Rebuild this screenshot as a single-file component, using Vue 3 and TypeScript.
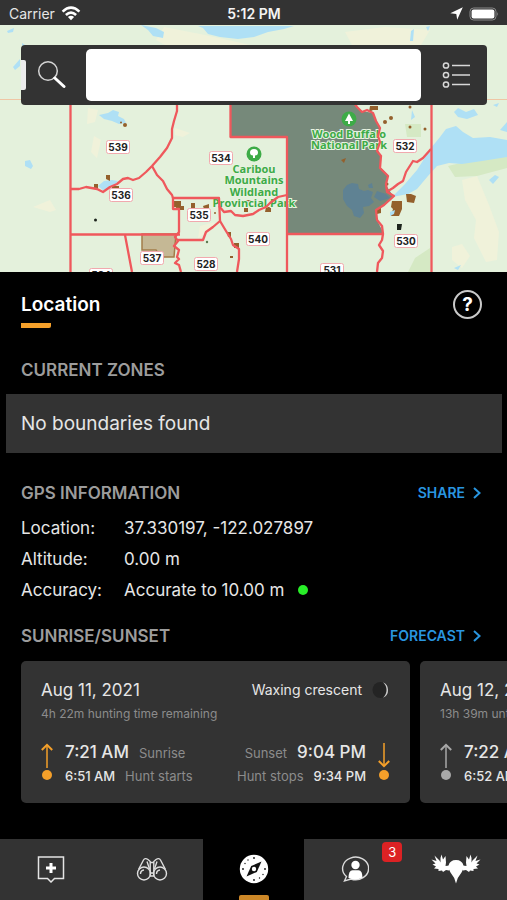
<script setup lang="ts">
import { ref } from 'vue'

interface ZoneLabel {
  id: string
  x: number
  y: number
}

interface SunEvent {
  time: string
  label: string
  huntTime: string
  huntLabel: string
}

interface DayCard {
  date: string
  remaining: string
  moon: string
  active: boolean
  rise: SunEvent
  set: SunEvent
}

const query = ref('')

const zones: ZoneLabel[] = [
  { id: '539', x: 118, y: 147 },
  { id: '536', x: 121, y: 195 },
  { id: '534', x: 221, y: 158 },
  { id: '535', x: 199, y: 215 },
  { id: '537', x: 152, y: 258 },
  { id: '528', x: 206, y: 264 },
  { id: '540', x: 258, y: 239 },
  { id: '532', x: 405, y: 146 },
  { id: '530', x: 406, y: 241 },
  { id: '531', x: 332, y: 270 },
  { id: '524', x: 101, y: 275 },
]

const gps = [
  { term: 'Location:', value: '37.330197, -122.027897', ok: false },
  { term: 'Altitude:', value: '0.00 m', ok: false },
  { term: 'Accuracy:', value: 'Accurate to 10.00 m', ok: true },
]

const days: DayCard[] = [
  {
    date: 'Aug 11, 2021',
    remaining: '4h 22m hunting time remaining',
    moon: 'Waxing crescent',
    active: true,
    rise: { time: '7:21 AM', label: 'Sunrise', huntTime: '6:51 AM', huntLabel: 'Hunt starts' },
    set: { time: '9:04 PM', label: 'Sunset', huntTime: '9:34 PM', huntLabel: 'Hunt stops' },
  },
  {
    date: 'Aug 12, 2021',
    remaining: '13h 39m until hunting time',
    moon: 'Waxing crescent',
    active: false,
    rise: { time: '7:22 AM', label: 'Sunrise', huntTime: '6:52 AM', huntLabel: 'Hunt starts' },
    set: { time: '9:02 PM', label: 'Sunset', huntTime: '9:32 PM', huntLabel: 'Hunt stops' },
  },
]
</script>

<template>
  <div class="screen">
    <header class="status">
      <div class="status-side">
        <span>Carrier</span>
        <svg width="20" height="15" viewBox="0 0 20 15" fill="none" stroke="#fff" stroke-width="2.6">
          <path d="M1.6 5.6Q10-2.2 18.4 5.6" />
          <path d="M4.9 9Q10 4.2 15.1 9" />
          <path d="M10 14.2L6.9 11.1Q10 8.6 13.1 11.1Z" fill="#fff" stroke="none" />
        </svg>
      </div>
      <span class="clock">5:12 PM</span>
      <div class="status-side status-right">
        <svg width="13" height="13" viewBox="0 0 13 13"><path d="M12.8.3L.3 6.2L6.3 7L7.2 12.8Z" fill="#fff" /></svg>
        <svg width="30" height="14" viewBox="0 0 30 14">
          <rect x="1" y="1" width="26" height="12" rx="3.6" fill="none" stroke="#8a8a8a" />
          <rect x="2.6" y="2.6" width="22.8" height="8.8" rx="2" fill="#fff" />
          <path d="M28.2 5Q30 7 28.2 9Z" fill="#8a8a8a" />
        </svg>
      </div>
    </header>

    <section class="map" aria-label="Map">
      <svg class="map-art" viewBox="0 25 507 247" preserveAspectRatio="xMidYMid slice">
        <rect y="25" width="507" height="247" fill="#e4f1dc" />
        <g fill="#f0f2da">
          <path d="M164 27L200 34L228 40L250 45H165L156 40Z" />
          <path d="M345 32L385 27L430 30L421 45H352Z" />
          <path d="M88 108L98 110L95 122L87 124ZM94 136L101 140L97 158L91 152Z" />
          <path d="M33 207L50 200L56 210L50 212ZM175 128L190 133L183 137L175 135Z" />
          <path d="M462 180L477 176L489 205L499 232L497 260L486 262L474 238L476 220L465 200Z" />
          <path d="M452 247L462 244L470 256L462 268L452 260Z" />
          <path d="M200 226L215 222L208 232L198 238Z" />
        </g>
        <g fill="#d5e9c4">
          <path d="M448 166L507 152V168L477 176L455 177Z" />
          <path d="M405 124H421V137H407Z" />
          <path d="M415 258L430 248V272H408Z" />
        </g>
        <g fill="#afe0f5">
          <path d="M141 25L156 28L164 32L163 38L153 36L148 30Z" />
          <path d="M198 26H294L284 29L268 32L254 37L238 39L220 37L208 34L203 28Z" />
          <path d="M7 31L14 28L13 32L8 33ZM13 67L20 59V66L15 70ZM22 43L25 45L22 46Z" />
          <path d="M411 31L414 29L413 41L410 41ZM426 27L430 26L428 31Z" />
          <path d="M99 115L108 113L113 110L119 112L118 116L124 119L126 123L119 124L112 121L104 119Z" />
          <path d="M25 161L30 160L33 166L31 169L25 166Z" />
          <path d="M98 186L104 181L112 180L118 181L114 186L104 191Z" />
          <path d="M392 197L405 184L417 170L431 148L440 137L446 129L456 126L463 132L473 138L490 137L507 140V157L482 161L462 164L449 163L437 166L428 176L417 189L408 194Z" />
          <path d="M458 108L466 112L474 109L478 115L467 119L458 117L454 112ZM493 105L499 103L497 107ZM412 110L415 117L411 120Z" />
          <path d="M500 130L507 122V132ZM489 180L495 175L499 177L493 184ZM454 268L461 265L458 270Z" />
        </g>
        <path d="M0 99.500H21M487 99.500H507" stroke="#efc6a4" fill="none" />
        <path
          d="M230 100H352L357 107L362 111L373 113L376 121L380 128L378 140L378 150L381 158L381 168L388 175L386 185L393 196L385 205L376 210L377 220L382 230L383 234H287V137H230Z"
          fill="#76897a" />
        <g fill="#5f8293">
          <path d="M343 190L347 185L352 183L358 184L359 189L364 191L368 190L373 192L371 198L374 202L369 206L363 207L364 213L360 218L354 216L352 210L347 206L343 199Z" />
          <path d="M368 185L372 183L373 188L369 188ZM377 191L386 194L390 198L380 201L374 197Z" />
        </g>
        <path d="M142 234H176L174 257H161L156 250L142 250Z" fill="#c5b895" stroke="#a37c49" stroke-width="1.500" />
        <g fill="#94602c">
          <circle cx="121" cy="122.500" r="1" /><circle cx="125" cy="125" r="2" />
          <circle cx="385" cy="122" r="2" /><circle cx="391" cy="118" r="2" />
          <circle cx="410" cy="107" r="1.500" /><circle cx="410" cy="127" r="1.500" /><circle cx="425" cy="129" r="1.500" />
          <path d="M106 175H110V181L106 179ZM94 184H98V189H94ZM112 186H119V189H112ZM174 201H181V206H184V210H176V207H174ZM191 203H195V208H191ZM203 206L209 204V208L204 209Z" />
          <path d="M245 200H251V203H245ZM244 208H248V212H244ZM266 207H271V212H265ZM227 232H231V237H228ZM234 243H239V248H234ZM230 256H233V258H230Z" />
          <path d="M370 106H378V110H373L369 112ZM392 201H402V209L399 216H391L393 209L391 207ZM406 194H411L416 196L414 203L407 202ZM341 160L346 158L344 163ZM377 208H381V213L377 214Z" />
          <circle cx="215" cy="213" r="1" /><circle cx="387" cy="184" r="1.500" />
        </g>
        <path d="M390 212L395 210L394 214L390 216Z" fill="#afe0f5" />
        <g fill="#1d241d">
          <circle cx="95.500" cy="220" r="1.500" />
          <circle cx="207" cy="242" r="1.200" fill="#5c7a50" />
          <path d="M397 224H402L401 230H397Z" />
        </g>
        <g class="park-name">
          <circle cx="254" cy="154" r="7.500" />
          <path d="M254 149Q258 149 258 152.500Q258 155.500 255 155.500V158H253V155.500Q250 155.500 250 152.500Q250 149 254 149Z" fill="#fff" />
          <text x="254" y="173">Caribou</text>
          <text x="254" y="184">Mountains</text>
          <text x="254" y="196">Wildland</text>
          <text x="254" y="207">Provincial Park</text>
          <circle cx="349" cy="119" r="7.500" />
          <path d="M349 113.500L353 121H350V124H348V121H345Z" fill="#fff" />
          <text x="349" y="138">Wood Buffalo</text>
          <text x="349" y="149">National Park</text>
        </g>
        <g fill="none" stroke="#ef585c" stroke-width="2.300" stroke-linejoin="round">
          <path d="M70.500 100V272M431.500 100V272M230.500 100V137H287V272M287 234H383M70 234.500H180" />
          <path d="M177 100V111L174 121L172 129L172 138L167 148L160 157L152 166L146 172L139 178L133 180L128 178L123 179L117 184L110 187L103 192L97 189L86 187L79 189H70" />
          <path d="M152 166L157 175L163 181L167 189L172 195L173 198H219L220 221L213 227L206 232L203 240H178" />
          <path d="M173 197V209H179V232L175 237L178 241L174 246L179 250L177 257L179 259L175 263L179 265L181 272" />
          <path d="M125 235L132 272M220 221L226 231L231 239L233 245L239 249L239 259L237 272" />
          <path d="M219 206L224 212L231 211L235 215L243 216L253 214L259 210L266 207L270 203L278 197L287 195" />
          <path d="M352 100L357 107L362 112L367 110L373 113L376 121L380 128L378 136L380 142L377 151L381 156L380 168L388 176L386 184L387 192L394 196L384 205L376 210L377 220L382 226L383 234L382 240L379 245L383 251L382 258L378 263L377 272" />
          <path d="M431 149L423 158L417 162L413 161L406 172L403 181L398 184L393 188L388 191" />
        </g>
        <g v-for="z in zones" :key="z.id" class="zone">
          <rect :x="z.x - 11.5" :y="z.y - 6.5" width="23" height="13" rx="2" />
          <text :x="z.x" :y="z.y + 4">{{ z.id }}</text>
        </g>
      </svg>

      <form class="search" role="search" @submit.prevent>
        <span class="grip"></span>
        <button class="search-btn" type="submit" aria-label="Search">
          <svg width="30" height="30" viewBox="0 0 30 30" fill="none">
            <circle cx="12" cy="11" r="9.300" stroke="#d4d4d4" stroke-width="1.500" />
            <path d="M18.800 18L28 26.500" stroke="#fff" stroke-width="3" stroke-linecap="round" />
          </svg>
        </button>
        <input v-model="query" class="search-input" type="text" aria-label="Search the map" />
        <button class="list-btn" type="button" aria-label="Map layers">
          <svg width="28" height="28" viewBox="0 0 28 28" fill="none" stroke="#d8d8d8" stroke-width="1.500">
            <circle cx="4" cy="4.500" r="2.600" /><circle cx="4" cy="14" r="2.600" /><circle cx="4" cy="23.500" r="2.600" />
            <path d="M10 4.500H28M10 14H28M10 23.500H28" />
          </svg>
        </button>
      </form>
    </section>

    <main class="panel">
      <div class="panel-head">
        <h1>Location</h1>
        <button class="help" type="button" aria-label="Help">?</button>
      </div>

      <h2 class="zones-title">Current Zones</h2>
      <p class="no-zones">No boundaries found</p>

      <div class="section-head">
        <h2>GPS Information</h2>
        <a href="#share">SHARE
          <svg width="8" height="12" viewBox="0 0 8 12" fill="none" stroke="currentColor" stroke-width="2"><path d="M1 1L6.500 6L1 11" /></svg>
        </a>
      </div>
      <dl class="gps">
        <template v-for="row in gps" :key="row.term">
          <dt>{{ row.term }}</dt>
          <dd>{{ row.value }}<i v-if="row.ok" class="ok-dot"></i></dd>
        </template>
      </dl>

      <div class="section-head sun-head">
        <h2>Sunrise/Sunset</h2>
        <a href="#forecast">FORECAST
          <svg width="8" height="12" viewBox="0 0 8 12" fill="none" stroke="currentColor" stroke-width="2"><path d="M1 1L6.500 6L1 11" /></svg>
        </a>
      </div>
      <div class="cards">
        <article v-for="day in days" :key="day.date" class="card" :class="{ active: day.active }">
          <div class="card-top">
            <h3>{{ day.date }}</h3>
            <span class="moon">{{ day.moon }}
              <svg width="18" height="18" viewBox="0 0 18 18">
                <circle cx="8.500" cy="9" r="8" fill="#242424" />
                <path d="M11 1.200A8.500 8.500 0 0 1 11 16.800Q14.500 13.500 14.500 9T11 1.200Z" fill="#c9c9c9" />
              </svg>
            </span>
          </div>
          <p class="remaining">{{ day.remaining }}</p>
          <div class="sun">
            <svg class="arrow" width="12" height="45" viewBox="0 0 12 45" fill="none" stroke="currentColor" stroke-width="2">
              <path d="M6 28V5" stroke-width="1.500" /><path d="M.800 10L6 4.800L11.200 10" />
              <circle cx="6" cy="35" r="5" fill="currentColor" stroke="none" />
            </svg>
            <div class="times">
              <p class="main-time"><b>{{ day.rise.time }}</b><span>{{ day.rise.label }}</span></p>
              <p class="hunt-time"><b>{{ day.rise.huntTime }}</b><span>{{ day.rise.huntLabel }}</span></p>
            </div>
            <div class="times times-end">
              <p class="main-time"><span>{{ day.set.label }}</span><b>{{ day.set.time }}</b></p>
              <p class="hunt-time"><span>{{ day.set.huntLabel }}</span><b>{{ day.set.huntTime }}</b></p>
            </div>
            <svg class="arrow" width="12" height="45" viewBox="0 0 12 45" fill="none" stroke="currentColor" stroke-width="2">
              <path d="M6 3V26" stroke-width="1.500" /><path d="M.800 21L6 26.200L11.200 21" />
              <circle cx="6" cy="35" r="5" fill="currentColor" stroke="none" />
            </svg>
          </div>
        </article>
      </div>
    </main>

    <nav class="tabs" aria-label="Main">
      <a href="#add" class="tab" aria-label="Add marker">
        <svg width="28" height="28" viewBox="0 0 28 28" fill="none" stroke="#e4e4e4" stroke-width="1.500">
          <path d="M1.500 2H26.500V23.500H17.500L14 27L10.500 23.500H1.500Z" />
          <path d="M14 8V18M9 13H19" stroke="#fff" stroke-width="3" />
        </svg>
      </a>
      <a href="#scout" class="tab" aria-label="Scouting">
        <svg width="32" height="26" viewBox="0 0 32 26" fill="none" stroke="#dedede" stroke-width="1.400">
          <circle cx="8" cy="17.500" r="6.500" /><circle cx="24" cy="17.500" r="6.500" />
          <path d="M2.500 13.500L7.500 4Q9 1.500 12 3.500L14.200 5.500V20M29.500 13.500L24.500 4Q23 1.500 20 3.500L17.800 5.500V20" />
          <path d="M14 6.500H18M14 17H18M14 20H18M11 5.500L13.500 13M21 5.500L18.500 13" />
          <path d="M4.500 18Q4.500 14.500 8 14M20.500 18Q20.500 14.500 24 14" />
        </svg>
      </a>
      <a href="#location" class="tab current" aria-label="Location" aria-current="page">
        <svg width="30" height="30" viewBox="0 0 30 30">
          <circle cx="15" cy="15" r="14.200" fill="#fff" />
          <path d="M22.500 7.500L17.800 18L7.500 22.500L12.200 12Z" fill="#111" />
          <circle cx="15" cy="15" r="2.200" fill="#fff" />
          <g fill="#111">
            <circle cx="15" cy="4" r=".9" /><circle cx="15" cy="26" r=".9" /><circle cx="4" cy="15" r=".9" /><circle cx="26" cy="15" r=".9" />
            <circle cx="9" cy="6" r=".7" /><circle cx="6" cy="9.500" r=".7" /><circle cx="24" cy="20.500" r=".7" /><circle cx="20.500" cy="24" r=".7" />
          </g>
        </svg>
      </a>
      <a href="#messages" class="tab" aria-label="Messages, 3 unread">
        <svg width="28" height="26" viewBox="0 0 28 26">
          <path d="M5.500 20.500A13 11.300 0 1 1 10 23L3.500 24.800Z" fill="none" stroke="#dcdcdc" stroke-width="1.400" />
          <circle cx="14.500" cy="9" r="4.200" fill="#fff" />
          <path d="M7.500 22Q7.500 14.500 11.500 14.200H17.500Q21.500 14.500 21.500 21.500Q14.500 25 7.500 22Z" fill="#fff" />
        </svg>
        <span class="badge">3</span>
      </a>
      <a href="#home" class="tab" aria-label="Profile">
        <svg width="50" height="30" viewBox="0 0 50 30" fill="#fff">
          <path d="M25 29.500Q23.500 23 19.500 18.500Q17 15 17.500 11.500Q19 6 25 6T32.500 11.500Q33 15 30.500 18.500Q26.500 23 25 29.500Z" />
          <path d="M18 16.500L15 16L12 18L11 16.500L7.500 17L7.500 15L3 14.500L5 12.500L1.500 10.500L4.500 9.500L.500 5.500L5.500 7L3.500 1.500L8.500 6.500L9.500 8.500L9.500 4L10.500 .500L12 5.500L14.500 2L15 8.500L14.500 12L18.500 11.500Z" />
          <path d="M32 16.500L35 16L38 18L39 16.500L42.500 17L42.500 15L47 14.500L45 12.500L48.500 10.500L45.500 9.500L49.500 5.500L44.500 7L46.500 1.500L41.500 6.500L40.500 8.500L40.500 4L39.500 .500L38 5.500L35.500 2L35 8.500L35.500 12L31.500 11.500Z" />
        </svg>
      </a>
    </nav>
  </div>
</template>

<style>
body {
  margin: 0;
  background: #000;
}
</style>

<style scoped>
.screen {
  display: flex;
  flex-direction: column;
  min-height: 100vh;
  overflow: hidden;
  background: #000;
  color: #e6e6e6;
  font-family: Inter, "Liberation Sans", sans-serif;
}
h1, h2, h3, p, dl, dd {
  margin: 0;
}
button {
  padding: 0;
  border: 0;
  background: none;
  color: inherit;
  font-family: inherit;
}
svg {
  display: block;
}

.status {
  display: flex;
  align-items: center;
  height: 25px;
  padding: 2px 8px 0 9px;
  box-sizing: border-box;
  background: #333;
  font-size: 14px;
}
.status-side {
  display: flex;
  flex: 1;
  align-items: center;
  gap: 6px;
}
.status-right {
  justify-content: flex-end;
}
.clock {
  color: #f4f4f4;
  font-weight: 600;
}

.map {
  position: relative;
  height: 247px;
  padding: 20px 20px 0 21px;
  box-sizing: border-box;
}
.map-art {
  position: absolute;
  inset: 0;
  width: 100%;
  height: 100%;
}
.park-name {
  fill: #3dab47;
}
.park-name text {
  font-family: "Open Sans", "Noto Sans", sans-serif;
  font-size: 11px;
  font-weight: 700;
  text-anchor: middle;
  stroke: #e8f3e1;
  stroke-width: 2px;
  paint-order: stroke;
}
.zone rect {
  fill: #fff;
  stroke: #f1a9ae;
}
.zone text {
  fill: #222;
  font-size: 10px;
  font-weight: 700;
  text-anchor: middle;
}
.search {
  position: relative;
  display: flex;
  align-items: center;
  height: 60px;
  border-radius: 4px;
  background: #333;
}
.grip {
  width: 5px;
  height: 30px;
  border-radius: 0 2px 2px 0;
  background: #ececec;
}
.search-btn {
  display: grid;
  place-items: center;
  width: 50px;
  height: 50px;
  margin-right: 10px;
}
.search-input {
  flex: 1;
  min-width: 0;
  height: 52px;
  padding: 0 12px;
  box-sizing: border-box;
  border: 0;
  border-radius: 5px;
  background: #fff;
  font: 17px Inter, sans-serif;
}
.list-btn {
  display: grid;
  place-items: center;
  width: 66px;
  height: 50px;
  padding-left: 4px;
}

.panel-head {
  display: flex;
  justify-content: space-between;
  padding: 18px 25px 0 21px;
}
h1 {
  color: #fff;
  font-size: 19px;
  font-weight: 600;
  line-height: 30px;
}
h1::after {
  content: "";
  display: block;
  width: 30px;
  height: 5px;
  margin-top: 3px;
  border-radius: 0 0 2px 0;
  background: #f5a02a;
}
.help {
  width: 29px;
  height: 29px;
  border: 2px solid #c9c9c9;
  border-radius: 50%;
  color: #fff;
  font-size: 19px;
  font-weight: 700;
  line-height: 25px;
}
h2 {
  color: #9c9c9c;
  font-size: 17px;
  font-weight: 600;
  line-height: 20px;
  text-transform: uppercase;
}
.zones-title {
  margin: 32px 21px 14px;
}
.no-zones {
  margin: 0 5px 30px 6px;
  padding: 0 15px;
  background: #333;
  font-size: 19px;
  line-height: 59px;
}
.section-head {
  display: flex;
  align-items: center;
  justify-content: space-between;
  padding: 0 26px 0 21px;
}
.section-head a {
  display: flex;
  align-items: center;
  gap: 8px;
  color: #2996e0;
  font-size: 14px;
  font-weight: 600;
  line-height: 20px;
  text-decoration: none;
}
.gps {
  display: grid;
  grid-template-columns: 103px 1fr;
  row-gap: 11px;
  padding: 15px 21px 26px;
  font-size: 17px;
  line-height: 20px;
}
.gps dd {
  display: flex;
  align-items: center;
}
.ok-dot {
  width: 10px;
  height: 10px;
  margin-left: 14px;
  border-radius: 50%;
  background: #28ee28;
}

.cards {
  display: flex;
  gap: 10px;
  padding: 15px 21px 36px;
  overflow: hidden;
}
.card {
  flex: 0 0 389px;
  padding: 17px 20px;
  box-sizing: border-box;
  border-radius: 5px;
  background: #333;
}
.card-top {
  display: flex;
  align-items: center;
  justify-content: space-between;
  line-height: 24px;
}
h3 {
  font-size: 17px;
  font-weight: 400;
}
.moon {
  display: flex;
  align-items: center;
  gap: 10px;
  font-size: 14px;
}
.remaining {
  margin-top: 4px;
  color: #8c8c8c;
  font-size: 12px;
  line-height: 16px;
}
.sun {
  display: flex;
  gap: 12px;
  margin-top: 18px;
}
.arrow {
  flex: none;
  color: #a8a8a8;
}
.active .arrow {
  color: #f5a02a;
}
.times {
  display: flex;
  flex: 1;
  flex-direction: column;
  gap: 1px;
  white-space: nowrap;
}
.times-end {
  align-items: flex-end;
}
.times p {
  display: flex;
  align-items: baseline;
  gap: 10px;
}
.times span {
  color: #8c8c8c;
  font-size: 13px;
}
.times b {
  font-weight: 500;
}
.main-time {
  font-size: 17px;
  line-height: 24px;
}
.hunt-time {
  font-size: 13px;
  line-height: 20px;
}

.tabs {
  display: flex;
  height: 61px;
  margin-top: auto;
  background: #333;
}
.tab {
  position: relative;
  display: flex;
  flex: 1;
  align-items: center;
  justify-content: center;
  padding-bottom: 2px;
}
.current {
  background: #000;
}
.current::after {
  content: "";
  position: absolute;
  bottom: 0;
  width: 30px;
  height: 5px;
  border-radius: 2px 2px 0 0;
  background: #cc8727;
}
.badge {
  position: absolute;
  top: 3px;
  left: 78px;
  width: 20px;
  border-radius: 4px;
  background: #dc2224;
  color: #fff;
  font-size: 13px;
  line-height: 20px;
  text-align: center;
}
</style>
